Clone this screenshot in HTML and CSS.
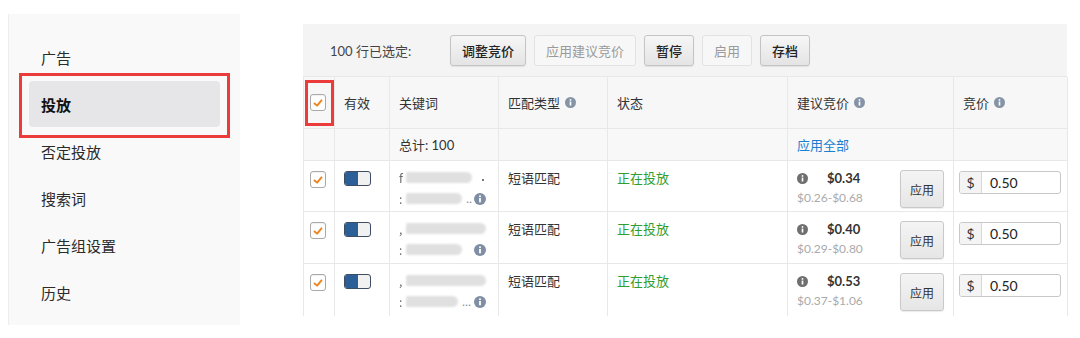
FILE: index.html
```html
<!DOCTYPE html>
<html lang="zh-CN">
<head>
<meta charset="utf-8">
<title>投放</title>
<link rel="stylesheet" href="styles.css">
</head>
<body>
<div class="page">
  <aside class="sidebar">
    <div class="nav-item">广告</div>
    <div class="nav-item active">投放</div>
    <div class="nav-item">否定投放</div>
    <div class="nav-item">搜索词</div>
    <div class="nav-item">广告组设置</div>
    <div class="nav-item">历史</div>
  </aside>

  <main class="main">
    <div class="toolbar">
      <span class="sel-label">100 行已选定:</span>
      <button class="btn">调整竞价</button>
      <button class="btn disabled">应用建议竞价</button>
      <button class="btn">暂停</button>
      <button class="btn disabled">启用</button>
      <button class="btn">存档</button>
    </div>

    <div class="grid">
      <!-- header -->
      <div class="cell head chk-cell marked"><span class="checkbox"><svg viewBox="0 0 16 16"><polyline points="4,8.5 7,11 12,5"/></svg></span></div>
      <div class="cell head">有效</div>
      <div class="cell head">关键词</div>
      <div class="cell head">匹配类型<span class="info hinfo"><svg viewBox="0 0 12 12"><circle cx="6" cy="6" r="6"/><rect x="5.1" y="5" width="1.8" height="4.3"/><circle cx="6" cy="3.2" r="1"/></svg></span></div>
      <div class="cell head">状态</div>
      <div class="cell head">建议竞价<span class="info hinfo"><svg viewBox="0 0 12 12"><circle cx="6" cy="6" r="6"/><rect x="5.1" y="5" width="1.8" height="4.3"/><circle cx="6" cy="3.2" r="1"/></svg></span></div>
      <div class="cell head">竞价<span class="info hinfo"><svg viewBox="0 0 12 12"><circle cx="6" cy="6" r="6"/><rect x="5.1" y="5" width="1.8" height="4.3"/><circle cx="6" cy="3.2" r="1"/></svg></span></div>

      <!-- total -->
      <div class="cell total"></div>
      <div class="cell total"></div>
      <div class="cell total">总计: 100</div>
      <div class="cell total"></div>
      <div class="cell total"></div>
      <div class="cell total"><span class="link">应用全部</span></div>
      <div class="cell total"></div>

      <!-- row 1 -->
      <div class="cell chk-cell row-cell"><span class="checkbox"><svg viewBox="0 0 16 16"><polyline points="4,8.5 7,11 12,5"/></svg></span></div>
      <div class="cell row-cell toggle-cell"><span class="toggle"><span class="toggle-on"></span></span></div>
      <div class="cell row-cell kw">
        <div class="kw-line"><span class="mark">f</span><span class="bar" style="width:66px"></span><span class="dot"></span></div>
        <div class="kw-line"><span class="mark">:</span><span class="bar" style="width:56px"></span><span class="ell">..</span><span class="info kinfo"><svg viewBox="0 0 12 12"><circle cx="6" cy="6" r="6"/><rect x="5.1" y="5" width="1.8" height="4.3"/><circle cx="6" cy="3.2" r="1"/></svg></span></div>
      </div>
      <div class="cell row-cell">短语匹配</div>
      <div class="cell row-cell status">正在投放</div>
      <div class="cell row-cell sugg">
        <div class="sugg-info">
          <div class="sugg-top"><span class="info pinfo"><svg viewBox="0 0 12 12"><circle cx="6" cy="6" r="6"/><rect x="5.1" y="5" width="1.8" height="4.3"/><circle cx="6" cy="3.2" r="1"/></svg></span><span class="price">$0.34</span></div>
          <div class="range">$0.26-$0.68</div>
        </div>
        <button class="apply">应用</button>
      </div>
      <div class="cell row-cell bid"><div class="bid-input"><span class="addon">$</span><span class="bid-val">0.50</span></div></div>

      <!-- row 2 -->
      <div class="cell chk-cell row-cell"><span class="checkbox"><svg viewBox="0 0 16 16"><polyline points="4,8.5 7,11 12,5"/></svg></span></div>
      <div class="cell row-cell toggle-cell"><span class="toggle"><span class="toggle-on"></span></span></div>
      <div class="cell row-cell kw">
        <div class="kw-line"><span class="mark">,</span><span class="bar" style="width:84px"></span></div>
        <div class="kw-line"><span class="mark">:</span><span class="bar" style="width:56px"></span><span class="ell"></span><span class="info kinfo"><svg viewBox="0 0 12 12"><circle cx="6" cy="6" r="6"/><rect x="5.1" y="5" width="1.8" height="4.3"/><circle cx="6" cy="3.2" r="1"/></svg></span></div>
      </div>
      <div class="cell row-cell">短语匹配</div>
      <div class="cell row-cell status">正在投放</div>
      <div class="cell row-cell sugg">
        <div class="sugg-info">
          <div class="sugg-top"><span class="info pinfo"><svg viewBox="0 0 12 12"><circle cx="6" cy="6" r="6"/><rect x="5.1" y="5" width="1.8" height="4.3"/><circle cx="6" cy="3.2" r="1"/></svg></span><span class="price">$0.40</span></div>
          <div class="range">$0.29-$0.80</div>
        </div>
        <button class="apply">应用</button>
      </div>
      <div class="cell row-cell bid"><div class="bid-input"><span class="addon">$</span><span class="bid-val">0.50</span></div></div>

      <!-- row 3 -->
      <div class="cell chk-cell row-cell last"><span class="checkbox"><svg viewBox="0 0 16 16"><polyline points="4,8.5 7,11 12,5"/></svg></span></div>
      <div class="cell row-cell toggle-cell last"><span class="toggle"><span class="toggle-on"></span></span></div>
      <div class="cell row-cell kw last">
        <div class="kw-line"><span class="mark">,</span><span class="bar" style="width:84px"></span></div>
        <div class="kw-line"><span class="mark">:</span><span class="bar" style="width:52px"></span><span class="ell">...</span><span class="info kinfo"><svg viewBox="0 0 12 12"><circle cx="6" cy="6" r="6"/><rect x="5.1" y="5" width="1.8" height="4.3"/><circle cx="6" cy="3.2" r="1"/></svg></span></div>
      </div>
      <div class="cell row-cell last">短语匹配</div>
      <div class="cell row-cell status last">正在投放</div>
      <div class="cell row-cell sugg last">
        <div class="sugg-info">
          <div class="sugg-top"><span class="info pinfo"><svg viewBox="0 0 12 12"><circle cx="6" cy="6" r="6"/><rect x="5.1" y="5" width="1.8" height="4.3"/><circle cx="6" cy="3.2" r="1"/></svg></span><span class="price">$0.53</span></div>
          <div class="range">$0.37-$1.06</div>
        </div>
        <button class="apply">应用</button>
      </div>
      <div class="cell row-cell bid last"><div class="bid-input"><span class="addon">$</span><span class="bid-val">0.50</span></div></div>
    </div>
  </main>
</div>
</body>
</html>
```

FILE: styles.css
```css
* { box-sizing: border-box; }

html, body {
  margin: 0;
  padding: 0;
  background: #ffffff;
}

body {
  font-family: "Lato", "Noto Sans CJK SC", sans-serif;
  color: #333;
  width: 1080px;
  height: 338px;
  overflow: hidden;
}

.page {
  display: flex;
  align-items: flex-start;
  padding: 14px 0 0 8px;
}

/* ---------- sidebar ---------- */
.sidebar {
  width: 232px;
  height: 311px;
  background: #f9f9f9;
  border-left: 1px solid #ededed;
  padding: 20px 0 0 20px;
  display: flex;
  flex-direction: column;
  gap: 1px;
}

.nav-item {
  position: relative;
  width: 191px;
  height: 46px;
  padding-left: 12px;
  display: flex;
  align-items: center;
  font-family: "Noto Sans CJK SC", sans-serif;
  font-size: 15px;
  color: #2b2b2b;
  border-radius: 4px;
}

.nav-item.active {
  background: #e6e6e9;
  font-weight: 700;
  color: #111;
}

.nav-item.active::after {
  content: "";
  position: absolute;
  left: -10px;
  right: -10px;
  top: -8px;
  bottom: -11px;
  border: 3px solid #ec3b3b;
}

/* ---------- main ---------- */
.main {
  margin-left: 63px;
  margin-top: 10px;
  width: 764px;
}

.toolbar {
  height: 52px;
  background: #f4f4f4;
  display: flex;
  align-items: center;
  gap: 8px;
  padding-left: 27px;
}

.sel-label {
  width: 112px;
  font-size: 13px;
  color: #444;
  font-family: "Lato", "Noto Sans CJK SC", sans-serif;
}

.btn {
  height: 31px;
  padding: 0 11px;
  font-family: "Noto Sans CJK SC", sans-serif;
  font-size: 13px;
  font-weight: 500;
  color: #222;
  background: linear-gradient(#f6f6f6, #e4e4e4);
  border: 1px solid #c4c4c4;
  border-radius: 3px;
  box-shadow: 0 1px 1px rgba(0, 0, 0, 0.08);
}

.btn.disabled {
  font-weight: 400;
  color: #9a9a9a;
  background: #f7f7f7;
  border-color: #e2e2e2;
  box-shadow: none;
}

/* ---------- grid ---------- */
.grid {
  display: grid;
  grid-template-columns: 31px 55px 109px 109px 180px 166px 114px;
  grid-template-rows: 52px 32px 51px 52px 52px;
  border-left: 1px solid #e8e8e8;
  border-top: 1px solid #e8e8e8;
}

.cell {
  border-right: 1px solid #e8e8e8;
  border-bottom: 1px solid #e8e8e8;
  padding: 8px 9px;
  font-family: "Noto Sans CJK SC", sans-serif;
  font-size: 13px;
  line-height: 18px;
  color: #333;
  background: #fff;
}

.cell.last { border-bottom: none; }

.cell.head {
  background: #f7f7f7;
  display: flex;
  align-items: center;
  padding-top: 0;
  padding-bottom: 0;
}

.cell.total {
  background: #f8f8f8;
  display: flex;
  align-items: center;
  padding-top: 0;
  padding-bottom: 0;
  font-family: "Lato", "Noto Sans CJK SC", sans-serif;
}

.link {
  font-family: "Noto Sans CJK SC", sans-serif;
  color: #1b7ed0;
}

.chk-cell { padding-left: 6px; padding-right: 0; }
.chk-cell.row-cell { padding-top: 10px; }

.marked { position: relative; }
.marked::after {
  content: "";
  position: absolute;
  left: 1px;
  right: 0;
  top: 3px;
  bottom: 2px;
  border: 3px solid #ec3b3b;
}

.checkbox {
  width: 16px;
  height: 17px;
  border: 1px solid #a9a9a9;
  border-radius: 3px;
  background: #fff;
  display: flex;
  align-items: center;
  justify-content: center;
  box-shadow: inset 0 1px 1px rgba(0,0,0,0.06);
}

.checkbox svg {
  width: 14px;
  height: 14px;
  fill: none;
  stroke: #f0841c;
  stroke-width: 2.2;
  stroke-linecap: round;
  stroke-linejoin: round;
}

.info {
  display: inline-flex;
}
.info svg { width: 100%; height: 100%; }
.info svg circle:first-child { fill: currentColor; }
.info svg rect, .info svg circle + rect + circle { fill: #fff; }

.hinfo {
  width: 11px;
  height: 11px;
  margin-left: 5px;
  color: #8593a7;
}

.kinfo {
  width: 12px;
  height: 12px;
  color: #7f8ea4;
  margin-left: auto;
}

.pinfo {
  width: 11px;
  height: 11px;
  color: #6f6f6f;
  margin-right: 19px;
}

/* toggle */
.toggle-cell { padding-top: 10px; }
.toggle {
  width: 27px;
  height: 15px;
  display: flex;
  border: 1px solid #3e4d61;
  border-radius: 3px;
  background: #f1f1f1;
  overflow: hidden;
}
.toggle-on {
  width: 13px;
  background: #2c5e97;
}

/* keyword (redacted) */
.kw {
  padding-top: 10px;
  padding-right: 12px;
  display: flex;
  flex-direction: column;
  gap: 8px;
}
.kw-line {
  display: flex;
  align-items: center;
  height: 13px;
  gap: 2px;
}
.mark {
  font-size: 12px;
  color: #666;
  width: 5px;
  filter: blur(0.4px);
}
.bar {
  height: 11px;
  background: #e0e0e0;
  border-radius: 2px 6px 6px 2px;
  filter: blur(0.8px);
}
.dot {
  width: 2px;
  height: 2px;
  background: #777;
  margin-left: auto;
  margin-right: 2px;
  margin-top: 5px;
}
.ell {
  font-size: 11px;
  color: #888;
  margin-left: 2px;
  line-height: 1;
}

.status { color: #2f9e2f; }

/* suggested bid */
.sugg {
  display: flex;
  align-items: flex-start;
}
.sugg-info { display: flex; flex-direction: column; }
.sugg-top {
  display: flex;
  align-items: center;
  height: 18px;
}
.price {
  font-family: "Lato", sans-serif;
  font-weight: 700;
  font-size: 13px;
  color: #333;
}
.range {
  margin-top: 2px;
  font-family: "Lato", sans-serif;
  font-size: 12px;
  color: #aaa;
}
.apply {
  margin-left: auto;
  margin-top: 1px;
  width: 44px;
  height: 38px;
  padding: 0;
  font-family: "Noto Sans CJK SC", sans-serif;
  font-size: 12px;
  color: #333;
  background: linear-gradient(#f4f4f4, #e6e6e6);
  border: 1px solid #c9c9c9;
  border-radius: 3px;
  box-shadow: 0 1px 1px rgba(0,0,0,0.08);
}

/* bid input */
.bid { padding: 10px 0 0 5px; }
.bid-input {
  width: 102px;
  height: 23px;
  display: flex;
  border: 1px solid #c8c8c8;
  border-radius: 3px;
  overflow: hidden;
  background: #fff;
}
.addon {
  width: 22px;
  background: #f4f4f4;
  border-right: 1px solid #d6d6d6;
  display: flex;
  align-items: center;
  justify-content: center;
  font-family: "Lato", sans-serif;
  font-size: 14px;
  color: #333;
}
.bid-val {
  padding-left: 8px;
  display: flex;
  align-items: center;
  font-family: "Lato", sans-serif;
  font-size: 14px;
  color: #222;
}
```
